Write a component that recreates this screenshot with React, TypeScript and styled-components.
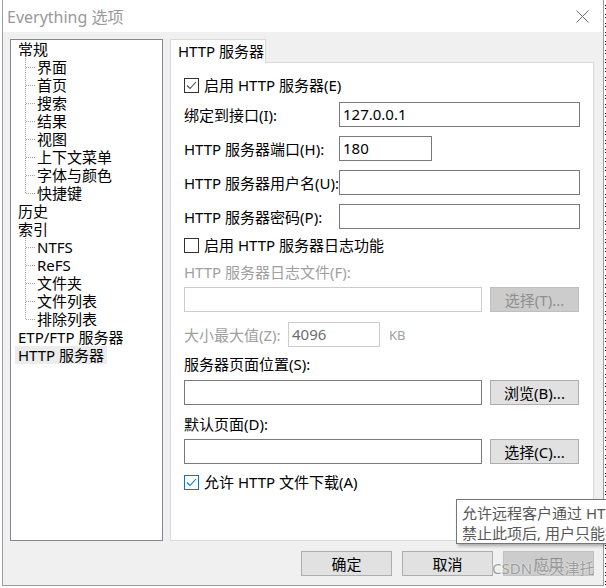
import styled, { createGlobalStyle } from "styled-components";

const GlobalStyle = createGlobalStyle`
  html, body {
    margin: 0;
    padding: 0;
    background: #ffffff;
  }
  body {
    font-family: "Noto Sans", "Noto Sans CJK SC", sans-serif;
    font-size: 15px;
    color: #000;
  }
`;

type TreeNode = { label: string; children?: string[]; selected?: boolean };

const treeData: TreeNode[] = [
  { label: "常规", children: ["界面", "首页", "搜索", "结果", "视图", "上下文菜单", "字体与颜色", "快捷键"] },
  { label: "历史" },
  { label: "索引", children: ["NTFS", "ReFS", "文件夹", "文件列表", "排除列表"] },
  { label: "ETP/FTP 服务器" },
  { label: "HTTP 服务器", selected: true },
];

const fields = [
  { label: "绑定到接口(I):", value: "127.0.0.1", width: 241 },
  { label: "HTTP 服务器端口(H):", value: "180", width: 93 },
  { label: "HTTP 服务器用户名(U):", value: "", width: 241 },
  { label: "HTTP 服务器密码(P):", value: "", width: 241 },
];

const Check = ({ checked, accent }: { checked?: boolean; accent?: boolean }) => (
  <CheckBox $accent={accent}>
    {checked && (
      <svg width="13" height="13" viewBox="0 0 13 13">
        <polyline
          points="2,6.5 5,9.5 11,3"
          fill="none"
          stroke={accent ? "#0078d7" : "#4a4a4a"}
          strokeWidth="1.1"
        />
      </svg>
    )}
  </CheckBox>
);

const App = () => {
  return (
    <>
      <GlobalStyle />
      <Screen>
        <Window>
          <TitleBar>
            <Title>Everything 选项</Title>
            <svg width="13" height="13" viewBox="0 0 13 13">
              <path d="M0.5 0.5 L12.5 12.5 M12.5 0.5 L0.5 12.5" stroke="#6b6b6b" strokeWidth="1" />
            </svg>
          </TitleBar>

          <Body>
            <Main>
              {/* 左侧树 */}
              <Tree>
                {treeData.map((node) => (
                  <div key={node.label}>
                    <TopItem $selected={node.selected}>{node.label}</TopItem>
                    {node.children && (
                      <ChildGroup>
                        {node.children.map((c) => (
                          <ChildItem key={c}>{c}</ChildItem>
                        ))}
                      </ChildGroup>
                    )}
                  </div>
                ))}
              </Tree>

              {/* 右侧选项卡 */}
              <TabArea>
                <TabStrip>
                  <Tab>HTTP 服务器</Tab>
                </TabStrip>
                <Panel>
                  <CheckRow>
                    <Check checked />
                    <span>启用 HTTP 服务器(E)</span>
                  </CheckRow>

                  {fields.map((f) => (
                    <FieldRow key={f.label} $top={9}>
                      <FieldLabel>{f.label}</FieldLabel>
                      <Input $width={f.width}>{f.value}</Input>
                    </FieldRow>
                  ))}

                  <CheckRow $top={9}>
                    <Check />
                    <span>启用 HTTP 服务器日志功能</span>
                  </CheckRow>

                  <Label $top={9} $disabled>HTTP 服务器日志文件(F):</Label>
                  <FileRow $top={5}>
                    <Input $width={298} $disabled />
                    <Button $disabled>选择(T)...</Button>
                  </FileRow>

                  <SizeRow $top={10}>
                    <SizeLabel>大小最大值(Z):</SizeLabel>
                    <Input $width={92} $disabled>4096</Input>
                    <Unit>KB</Unit>
                  </SizeRow>

                  <Label $top={7}>服务器页面位置(S):</Label>
                  <FileRow $top={6}>
                    <Input $width={298} />
                    <Button>浏览(B)...</Button>
                  </FileRow>

                  <Label $top={9}>默认页面(D):</Label>
                  <FileRow $top={5}>
                    <Input $width={298} />
                    <Button>选择(C)...</Button>
                  </FileRow>

                  <CheckRow $top={11}>
                    <Check checked accent />
                    <span>允许 HTTP 文件下载(A)</span>
                  </CheckRow>
                </Panel>
              </TabArea>
            </Main>

            <Footer>
              <Button $wide>确定</Button>
              <Button $wide>取消</Button>
              <Button $wide $disabled>应用</Button>
            </Footer>
          </Body>
        </Window>

        <Backdrop />

        <Tooltip>
          <div>允许远程客户通过 HTTP 访问 Everything 文件。</div>
          <div>禁止此项后, 用户只能搜索, 不能下载文件。</div>
        </Tooltip>
        <Watermark>CSDN @天津托</Watermark>
      </Screen>
    </>
  );
};

const Screen = styled.div`
  position: relative;
  width: 606px;
  height: 588px;
  overflow: hidden;
  display: flex;
  align-items: flex-start;
  background: #ffffff;
`;

const Window = styled.div`
  box-sizing: border-box;
  width: 602px;
  height: 586px;
  margin-left: 2px;
  border: 1px solid #9c9c9c;
  border-top: none;
  display: flex;
  flex-direction: column;
  background: #f0f0f0;
`;

const TitleBar = styled.div`
  height: 32px;
  flex-shrink: 0;
  background: #ffffff;
  display: flex;
  align-items: center;
  justify-content: space-between;
  padding: 0 14px 0 4px;
`;

const Title = styled.span`
  font-size: 16px;
  color: #999999;
`;

const Body = styled.div`
  flex: 1;
  padding: 7px 9px 0 7px;
  display: flex;
  flex-direction: column;
`;

const Main = styled.div`
  display: flex;
  gap: 7px;
  height: 502px;
`;

const Tree = styled.div`
  box-sizing: border-box;
  width: 153px;
  border: 1px solid #828790;
  background: #ffffff;
  padding: 0 0 0 4px;
  line-height: 18px;
`;

const TopItem = styled.div<{ $selected?: boolean }>`
  display: inline-block;
  height: 18px;
  padding: 0 3px;
  background: ${(p) => (p.$selected ? "#ececec" : "transparent")};
  white-space: nowrap;
`;

const ChildGroup = styled.div`
  position: relative;
  margin-left: 10px;

  &::before {
    content: "";
    position: absolute;
    left: 0;
    top: 0;
    bottom: 9px;
    border-left: 1px dotted #a0a0a0;
  }
`;

const ChildItem = styled.div`
  position: relative;
  height: 18px;
  padding-left: 12px;
  white-space: nowrap;

  &::before {
    content: "";
    position: absolute;
    left: 1px;
    top: 9px;
    width: 9px;
    border-top: 1px dotted #a0a0a0;
  }
`;

const TabArea = styled.div`
  width: 424px;
  display: flex;
  flex-direction: column;
`;

const TabStrip = styled.div`
  display: flex;
  position: relative;
  z-index: 1;
  margin-bottom: -1px;
`;

const Tab = styled.div`
  box-sizing: border-box;
  width: 96px;
  height: 24px;
  border: 1px solid #d9d9d9;
  border-bottom: none;
  background: #ffffff;
  padding-left: 7px;
  line-height: 22px;
  white-space: nowrap;
`;

const Panel = styled.div`
  flex: 1;
  border: 1px solid #d9d9d9;
  background: #ffffff;
  padding: 15px 13px 0 13px;
  display: flex;
  flex-direction: column;
  align-items: flex-start;
`;

const CheckRow = styled.div<{ $top?: number }>`
  display: flex;
  align-items: center;
  gap: 5px;
  height: 15px;
  line-height: 15px;
  margin-top: ${(p) => p.$top ?? 0}px;
  white-space: nowrap;
`;

const CheckBox = styled.span<{ $accent?: boolean }>`
  box-sizing: border-box;
  width: 15px;
  height: 15px;
  border: 1px solid ${(p) => (p.$accent ? "#0078d7" : "#333333")};
  background: #ffffff;
  display: inline-flex;
  align-items: center;
  justify-content: center;
  flex-shrink: 0;
`;

const FieldRow = styled.div<{ $top?: number }>`
  display: grid;
  grid-template-columns: 155px auto;
  align-items: center;
  margin-top: ${(p) => p.$top ?? 0}px;
`;

const FieldLabel = styled.span`
  white-space: nowrap;
`;

const Label = styled.div<{ $top?: number; $disabled?: boolean }>`
  height: 20px;
  line-height: 20px;
  margin-top: ${(p) => p.$top ?? 0}px;
  color: ${(p) => (p.$disabled ? "#a0a0a0" : "#000")};
  white-space: nowrap;
`;

const Input = styled.div<{ $width: number; $disabled?: boolean }>`
  box-sizing: border-box;
  width: ${(p) => p.$width}px;
  height: 25px;
  border: 1px solid ${(p) => (p.$disabled ? "#cccccc" : "#7a7a7a")};
  background: #ffffff;
  padding-left: 3px;
  line-height: 23px;
  color: ${(p) => (p.$disabled ? "#6d6d6d" : "#000")};
`;

const FileRow = styled.div<{ $top?: number }>`
  display: flex;
  gap: 8px;
  margin-top: ${(p) => p.$top ?? 0}px;
`;

const SizeRow = styled.div<{ $top?: number }>`
  display: flex;
  align-items: center;
  margin-top: ${(p) => p.$top ?? 0}px;
`;

const SizeLabel = styled.span`
  width: 104px;
  color: #a0a0a0;
  white-space: nowrap;
`;

const Unit = styled.span`
  margin-left: 9px;
  font-size: 13px;
  color: #a0a0a0;
`;

const Button = styled.div<{ $disabled?: boolean; $wide?: boolean }>`
  box-sizing: border-box;
  width: ${(p) => (p.$wide ? 91 : 89)}px;
  height: 25px;
  border: 1px solid ${(p) => (p.$disabled ? "#bfbfbf" : "#adadad")};
  background: ${(p) => (p.$disabled ? "#cccccc" : "#e1e1e1")};
  color: ${(p) => (p.$disabled ? "#8f8f8f" : "#000")};
  display: flex;
  align-items: center;
  justify-content: center;
  white-space: nowrap;
`;

const Footer = styled.div`
  display: flex;
  justify-content: flex-end;
  gap: 10px;
  margin-top: 10px;
`;

const Backdrop = styled.div`
  width: 2px;
  height: 588px;
  margin-left: 1px;
  background: repeating-linear-gradient(
    to bottom,
    #ffffff 0px,
    #ffffff 5px,
    #1a1a1a 5px,
    #1a1a1a 6px,
    #ffffff 6px,
    #ffffff 8px,
    #1a1a1a 8px,
    #1a1a1a 9px
  );
`;

const Tooltip = styled.div`
  position: absolute;
  left: 456px;
  top: 499px;
  width: 320px;
  height: 45px;
  box-sizing: border-box;
  border: 1px solid #767676;
  background: #ffffff;
  box-shadow: 2px 2px 3px rgba(0, 0, 0, 0.3);
  padding: 3px 0 0 5px;
  line-height: 20px;
  color: #575757;
  white-space: nowrap;
`;

const Watermark = styled.div`
  position: absolute;
  left: 492px;
  top: 557px;
  font-size: 15px;
  color: rgba(140, 140, 140, 0.85);
  text-shadow: 0 0 2px #ffffff;
  white-space: nowrap;
`;

export default App;
